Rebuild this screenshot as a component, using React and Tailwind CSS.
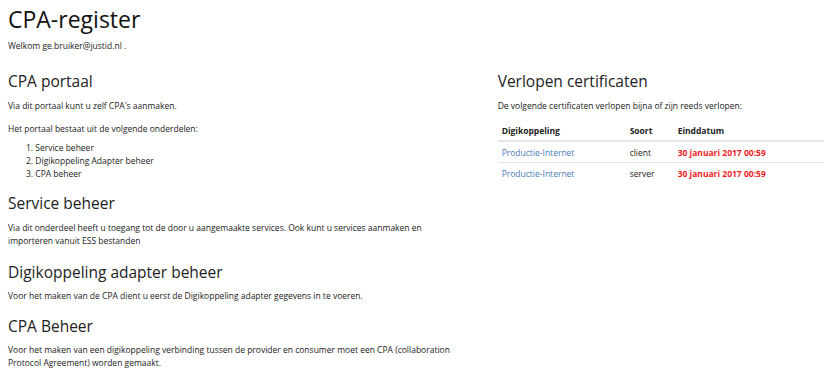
import React from 'react';

const expiring = [
  { name: 'Productie-Internet', soort: 'client', einde: '30 januari 2017 00:59' },
  { name: 'Productie-Internet', soort: 'server', einde: '30 januari 2017 00:59' }
];

export default function App() {
  return (
    <div className="min-h-screen bg-white px-2 pt-1 text-[#222] font-['Open_Sans',sans-serif]">
      <h1 className="text-[23px] leading-[30px] text-[#111]">CPA-register</h1>
      <p className="mt-[6px] text-[8.5px] leading-[12px]">Welkom ge.bruiker@justid.nl .</p>

      <div className="flex gap-[30px] mt-[18px]">
        <div className="w-[462px]">
          <h2 className="text-[15.5px] leading-[22px]">CPA portaal</h2>
          <p className="mt-[7px] text-[8.5px] leading-[13px]">Via dit portaal kunt u zelf CPA's aanmaken.</p>
          <p className="mt-[10px] text-[8.5px] leading-[13px]">Het portaal bestaat uit de volgende onderdelen:</p>
          <ol className="mt-[6px] pl-[18px] text-[8.5px] leading-[13px] list-decimal list-inside">
            <li>Service beheer</li>
            <li>Digikoppeling Adapter beheer</li>
            <li>CPA beheer</li>
          </ol>

          <h2 className="mt-[12px] text-[15.5px] leading-[22px]">Service beheer</h2>
          <p className="mt-[7px] text-[8.5px] leading-[13px]">
            Via dit onderdeel heeft u toegang tot de door u aangemaakte services. Ook kunt u services aanmaken en importeren vanuit ESS bestanden
          </p>

          <h2 className="mt-[14px] text-[15.5px] leading-[22px]">Digikoppeling adapter beheer</h2>
          <p className="mt-[6px] text-[8.5px] leading-[13px]">
            Voor het maken van de CPA dient u eerst de Digikoppeling adapter gegevens in te voeren.
          </p>

          <h2 className="mt-[13px] text-[15.5px] leading-[22px]">CPA Beheer</h2>
          <p className="mt-[6px] text-[8.5px] leading-[13px]">
            Voor het maken van een digikoppeling verbinding tussen de provider en consumer moet een CPA (collaboration Protocol Agreement) worden gemaakt.
          </p>
        </div>

        <div className="w-[328px]">
          <h2 className="text-[15.5px] leading-[22px]">Verlopen certificaten</h2>
          <p className="mt-[7px] text-[8.5px] leading-[13px]">De volgende certificaten verlopen bijna of zijn reeds verlopen:</p>
          <table className="mt-[8px] w-full text-[8.5px] leading-[13px]">
            <thead>
              <tr className="border-b-2 border-[#e5e5e5] text-left font-bold">
                <th className="w-[128px] px-[4px] py-[3.5px]">Digikoppeling</th>
                <th className="w-[48px] px-[4px] py-[3.5px]">Soort</th>
                <th className="px-[4px] py-[3.5px]">Einddatum</th>
              </tr>
            </thead>
            <tbody>
              {expiring.map((row, i) => (
                <tr key={i} className={i === 0 ? 'border-b border-[#e5e5e5]' : ''}>
                  <td className="px-[4px] py-[3.5px] text-[#4a7cb8]">{row.name}</td>
                  <td className="px-[4px] py-[3.5px]">{row.soort}</td>
                  <td className="px-[4px] py-[3.5px] font-bold text-[#ee1c25]">{row.einde}</td>
                </tr>
              ))}
            </tbody>
          </table>
        </div>
      </div>
    </div>
  );
}
